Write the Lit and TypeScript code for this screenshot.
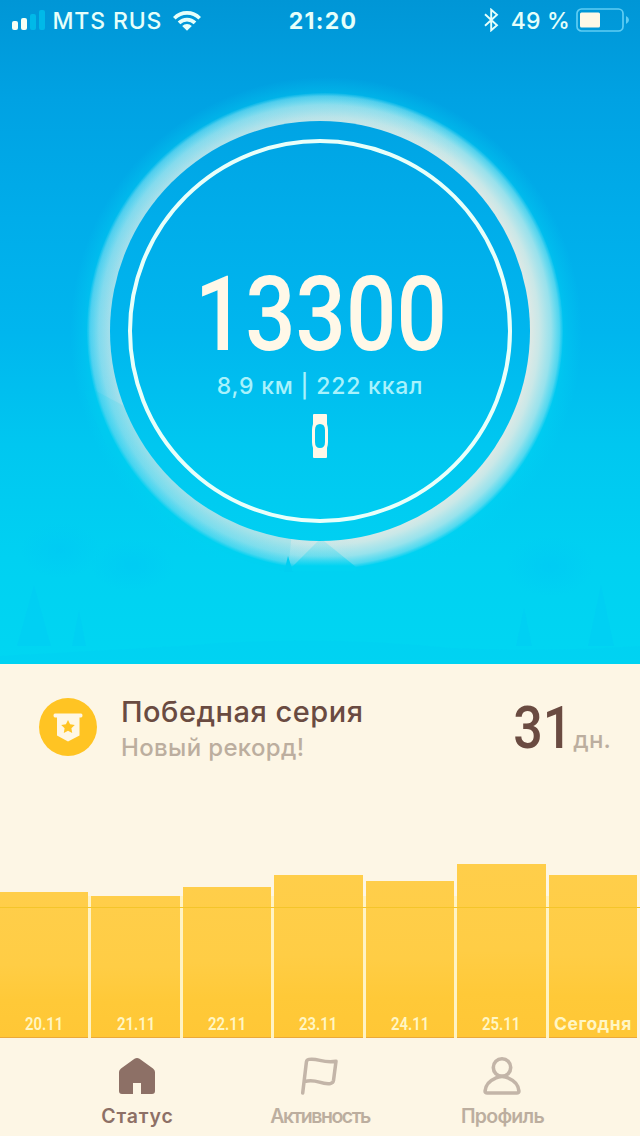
import { LitElement, html, svg, css } from "lit";
import { customElement, property } from "lit/decorators.js";
import { classMap } from "lit/directives/class-map.js";
import { styleMap } from "lit/directives/style-map.js";

@customElement("status-bar")
class StatusBar extends LitElement {
  static styles = css`
    :host { display: flex; height: 40px; align-items: center; color: #e6fffa;
      font: 500 23px/42px "Inter", "Liberation Sans", sans-serif; white-space: nowrap; }
    .side { flex: 1; display: flex; align-items: center; }
    .left { padding-left: 12px; }
    .right { justify-content: flex-end; padding-right: 10px; }
    .carrier { margin: 1px 11px 0 7.5px; letter-spacing: 0.85px; }
    .time { font-weight: 700; letter-spacing: 1.3px; padding-left: 4px; margin-top: 1px; }
    .charge { margin: 1px 6px 0 12px; letter-spacing: 0.2px; }
    svg { display: block; }
  `;
  render() {
    return html`
      <div class="side left">
        <svg width="33" height="20" viewBox="0 0 33 20">
          <rect x="0" y="11" width="6" height="9" rx="2" fill="#f4fff4" />
          <rect x="9" y="8" width="6" height="12" rx="2" fill="#f4fff4" />
          <rect x="18" y="4" width="6" height="16" rx="2" fill="#00b9e8" />
          <rect x="27" y="0" width="6" height="20" rx="2" fill="#00b9e8" />
        </svg>
        <span class="carrier">MTS RUS</span>
        <svg width="28" height="21" viewBox="0 0 28 21" fill="none" stroke="#e6fffa" stroke-width="3.7">
          <path d="M1.3 8.2A18 18 0 0 1 26.7 8.2" />
          <path d="M6 12.9A11.4 11.4 0 0 1 22 12.9" />
          <path d="M9.2 16A6.8 6.8 0 0 1 18.8 16L14 20.8Z" fill="#e6fffa" stroke="none" />
        </svg>
      </div>
      <span class="time">21:20</span>
      <div class="side right">
        <svg width="15" height="24" viewBox="0 0 15 24" fill="none" stroke="#e6fffa" stroke-width="1.9">
          <path d="M1 6.2L13 17.2L7.2 22.3V1.7L13 6.8L1 17.8" />
        </svg>
        <span class="charge">49 %</span>
        <svg width="54" height="24" viewBox="0 0 54 24">
          <rect x="1" y="1" width="46" height="22" rx="4.5" fill="none" stroke="#5fcdf3" stroke-width="1.7" />
          <rect x="4" y="4.5" width="20" height="15" rx="1.5" fill="#fff8e6" />
          <path d="M50 8Q53 9.500 53 12Q53 14.500 50 16Z" fill="#5fcdf3" />
        </svg>
      </div>`;
  }
}

@customElement("step-dial")
class StepDial extends LitElement {
  static styles = css`
    :host { display: grid; height: 664px; overflow: hidden; }
    .scene, .content { grid-area: 1 / 1; }
    .scene { display: block; width: 640px; height: 664px; }
    .content { z-index: 1; display: flex; flex-direction: column; }
    .readout { display: flex; flex-direction: column; align-items: center; padding-top: 225px; }
    .steps { font: 500 104px/100px "Roboto", "Liberation Sans", sans-serif; color: #fff8e8;
      margin-left: 2px; transform: scaleX(0.853); }
    .details { margin-top: 6px; font: 500 23px/30px "Inter", "Liberation Sans", sans-serif;
      letter-spacing: 0.8px; color: #a8f2fc; white-space: nowrap; }
    .band { display: block; margin-top: 13px; }
  `;
  render() {
    return html`
      <svg class="scene" viewBox="0 0 640 664">
        <defs>
          <linearGradient id="sky" gradientUnits="userSpaceOnUse" x1="0" y1="0" x2="0" y2="664">
            <stop offset="0" stop-color="#0096d6" />
            <stop offset="0.15" stop-color="#00a2e3" />
            <stop offset="0.33" stop-color="#00adea" />
            <stop offset="0.5" stop-color="#00b6ee" />
            <stop offset="0.67" stop-color="#00c7f0" />
            <stop offset="0.84" stop-color="#00d1f2" />
            <stop offset="1" stop-color="#00d6f2" />
          </linearGradient>
          <radialGradient id="halo" gradientUnits="userSpaceOnUse" cx="326" cy="333" r="256">
            <stop offset="0.9" stop-color="#00d2f2" stop-opacity="0.72" />
            <stop offset="0.94" stop-color="#00d2f2" stop-opacity="0.34" />
            <stop offset="1" stop-color="#00d2f2" stop-opacity="0" />
          </radialGradient>
          <radialGradient id="glow" gradientUnits="userSpaceOnUse" cx="325" cy="331" r="238">
            <stop offset="0.86" stop-color="#dfe9e5" />
            <stop offset="0.9" stop-color="#d4e9e7" stop-opacity="0.95" />
            <stop offset="0.95" stop-color="#bde7eb" stop-opacity="0.8" />
            <stop offset="0.985" stop-color="#a0e3ee" stop-opacity="0.5" />
            <stop offset="1" stop-color="#80dcf0" stop-opacity="0.1" />
          </radialGradient>
          <radialGradient id="shade">
            <stop offset="0" stop-color="#00c8f4" stop-opacity="0.6" />
            <stop offset="1" stop-color="#00c8f4" stop-opacity="0" />
          </radialGradient>
          <linearGradient id="tint" gradientUnits="userSpaceOnUse" x1="140" y1="160" x2="440" y2="240">
            <stop offset="0" stop-color="#50cbf2" stop-opacity="0.3" />
            <stop offset="1" stop-color="#50cbf2" stop-opacity="0" />
          </linearGradient>
          <linearGradient id="peak" gradientUnits="userSpaceOnUse" x1="0" y1="540" x2="0" y2="566">
            <stop offset="0" stop-color="#5fdcee" stop-opacity="0.25" />
            <stop offset="0.6" stop-color="#35d8f0" stop-opacity="0.45" />
            <stop offset="1" stop-color="#00d3f2" stop-opacity="1" />
          </linearGradient>
        </defs>
        <rect width="640" height="664" fill="url(#sky)" />
        <circle cx="326" cy="333" r="256" fill="url(#halo)" />
        <circle cx="325" cy="331" r="238" fill="url(#glow)" />
        <circle cx="325" cy="331" r="236" fill="url(#tint)" />
        <path d="M84 391H96L128 408L300 450L288 572Q130 540 84 391Z" fill="#00d0f2" opacity="0.13" />
        <path d="M284 572L288 556L293 572Z" fill="#00cff1" />
        <path d="M292 567L318 541H324L356 567V571H292Z" fill="url(#peak)" />
        <ellipse cx="60" cy="550" rx="40" ry="28" fill="url(#shade)" />
        <ellipse cx="132" cy="565" rx="42" ry="26" fill="url(#shade)" />
        <ellipse cx="550" cy="566" rx="44" ry="30" fill="url(#shade)" />
        ${[[34, 585, 17], [79, 610, 7], [524, 608, 8], [601, 585, 13]].map(
          ([x, y, w]) => svg`<path d="M${x} ${y}L${x + w} 646H${x - w}Z" fill="#00c8f4" opacity="0.3" />`
        )}
        <path d="M0 656Q110 650 180 646Q320 634 450 648Q560 652 640 646V664H0Z" fill="#00cdf4" opacity="0.35" />
        <circle cx="320" cy="331" r="210" fill="url(#sky)" />
        <circle cx="320" cy="331" r="190" fill="none" stroke="#e8fffa" stroke-width="4" />
      </svg>
      <div class="content">
        <status-bar></status-bar>
        <div class="readout">
          <span class="steps">13300</span>
          <span class="details">8,9 км | 222 ккал</span>
          <svg class="band" width="16" height="44" viewBox="0 0 16 44">
            <path fill-rule="evenodd" fill="#fff8e8" d="M2 0H14Q15 0 15 1V10Q16 13 16 16V28Q16 31 15 34V43Q15 44 14 44H2Q1 44 1 43V34Q0 31 0 28V16Q0 13 1 10V1Q1 0 2 0ZM8 10Q3 10 3 16V28Q3 34 8 34Q13 34 13 28V16Q13 10 8 10Z" />
          </svg>
        </div>
      </div>`;
  }
}

@customElement("streak-card")
class StreakCard extends LitElement {
  static styles = css`
    :host { display: flex; align-items: center; height: 126px; padding: 0 29px 0 39px; box-sizing: border-box;
      font-family: "Inter", "Liberation Sans", sans-serif; white-space: nowrap; }
    .badge { display: block; }
    .text { flex: 1; display: flex; flex-direction: column; margin: 4px 0 0 24px; }
    .title { font-size: 29px; line-height: 36px; font-weight: 500; color: #6a4b41; letter-spacing: 0.5px; }
    .note { font-size: 24px; line-height: 35px; font-weight: 500; color: #bcae9f; letter-spacing: 0.35px; }
    .count { display: flex; align-items: baseline; color: #6a4b41; margin-top: 2px; }
    .days { font: 500 60px/60px "Roboto", "Liberation Sans", sans-serif; transform: scaleX(0.865); transform-origin: right; }
    .unit { margin-left: 1px; padding-left: 0; font-size: 24px; font-weight: 500; color: #bcae9f; letter-spacing: 0.2px; }
  `;
  render() {
    return html`
      <svg class="badge" width="58" height="58" viewBox="0 0 58 58">
        <circle cx="29" cy="29" r="29" fill="#ffc423" />
        <path d="M16 15.500H42Q43.500 15.500 43.500 17.500T42 19.500H40.500V37.500L29 43.500L18 37.500V19.500H16Q14.500 19.500 14.500 17.500T16 15.500Z" fill="#fff7e4" />
        <path d="M29 22L31.100 26.300L35.800 27L32.400 30.300L33.200 35L29 32.800L24.800 35L25.600 30.300L22.200 27L26.900 26.300Z" fill="#ffc423" />
      </svg>
      <div class="text">
        <span class="title">Победная серия</span>
        <span class="note">Новый рекорд!</span>
      </div>
      <div class="count"><span class="days">31</span><span class="unit">дн.</span></div>`;
  }
}

interface Day { label: string; height: number; today?: boolean; }

@customElement("week-chart")
class WeekChart extends LitElement {
  @property({ attribute: false }) days: Day[] = [];
  static styles = css`
    :host { display: grid; height: 248px; }
    .bars, .goal { grid-area: 1 / 1; }
    .bars { display: grid; grid-template-columns: repeat(7, 88.42px); column-gap: 3.05px; align-items: end;
      background: linear-gradient(#fff3c4, #fff3c4) 0 100% / 637px 142px no-repeat; }
    .goal { align-self: end; height: 1px; margin-bottom: 130px; background: #f4c52a; z-index: 1; }
    .bar { box-sizing: border-box; display: flex; flex-direction: column; align-items: center; justify-content: flex-end;
      background: linear-gradient(#ffce4a, #ffcd45 50%, #ffc938 75%, #ffc736); border-bottom: 1px solid #eba93a;
      color: #fff6c4; font: 600 18px/20px "Roboto", "Liberation Sans", sans-serif; padding-bottom: 3px; }
    .label { transform: scaleX(0.83); }
    .today { font: 700 17.5px/20px "Inter", "Liberation Sans", sans-serif; letter-spacing: 0.5px; transform: none; }
  `;
  render() {
    return html`
      <div class="bars">
        ${this.days.map((d) => html`
          <div class="bar" style=${styleMap({ height: `${d.height}px` })}>
            <span class=${classMap({ label: true, today: !!d.today })}>${d.label}</span>
          </div>`)}
      </div>
      <div class="goal"></div>`;
  }
}

@customElement("tab-bar")
class TabBar extends LitElement {
  static styles = css`
    :host { display: grid; grid-template-columns: repeat(3, 182.5px); justify-content: center; height: 98px;
      padding-right: 2px; font: 600 19.5px/24px "Inter", "Liberation Sans", sans-serif; color: #bcae9f; white-space: nowrap; }
    .tab { display: flex; flex-direction: column; align-items: center; padding-top: 19px; }
    .tab svg { display: block; margin-bottom: 9px; }
    .tab span { padding-left: 2px; }
    .active { color: #8d7066; letter-spacing: 0.85px; }
    .tight { letter-spacing: -1.5px; }
    .snug { letter-spacing: -0.75px; }
  `;
  render() {
    return html`
      <div class="tab">
        <svg width="38" height="38" viewBox="0 0 38 38">
          <path d="M16.500 1.800Q19 0.300 21.500 1.800L35 11.500Q37 13 37 15V34Q37 37 34 37H23V26H15V37H4Q1 37 1 34V15Q1 13 3 11.500Z" fill="#8d7066" />
        </svg>
        <span class="active">Статус</span>
      </div>
      <div class="tab">
        <svg width="38" height="38" viewBox="0 0 38 38" fill="none" stroke="#c3b5a8" stroke-width="3.500" stroke-linecap="round" stroke-linejoin="round">
          <path d="M2.700 36L6.400 5Q6.700 2.800 9 2.400C18 .7 23 6.700 36 4.200L33.500 23.500Q33 26 30.500 26.500C20 28 17 21 4.500 24.500" />
        </svg>
        <span class="tight">Активность</span>
      </div>
      <div class="tab">
        <svg width="40" height="38" viewBox="0 0 40 38" fill="none" stroke="#c3b5a8" stroke-width="3.600" stroke-linejoin="round">
          <circle cx="20" cy="10.500" r="8.700" />
          <path d="M13.200 21.300C6.700 24 3.500 29 3.100 34Q3 36 5.200 36H34.800Q37 36 36.900 34C36.500 29 33.300 24 26.800 21.300Q20 17.500 13.200 21.300Z" />
        </svg>
        <span class="snug">Профиль</span>
      </div>`;
  }
}

@customElement("app-root")
class AppRoot extends LitElement {
  static styles = css`
    :host { display: flex; flex-direction: column; width: 640px; height: 1136px; overflow: hidden; background: #fdf6e5; }
  `;
  private days: Day[] = [
    { label: "20.11", height: 146 },
    { label: "21.11", height: 142 },
    { label: "22.11", height: 151 },
    { label: "23.11", height: 163 },
    { label: "24.11", height: 157 },
    { label: "25.11", height: 174 },
    { label: "Сегодня", height: 163, today: true },
  ];
  render() {
    return html`
      <step-dial></step-dial>
      <streak-card></streak-card>
      <week-chart .days=${this.days}></week-chart>
      <tab-bar></tab-bar>`;
  }
}
